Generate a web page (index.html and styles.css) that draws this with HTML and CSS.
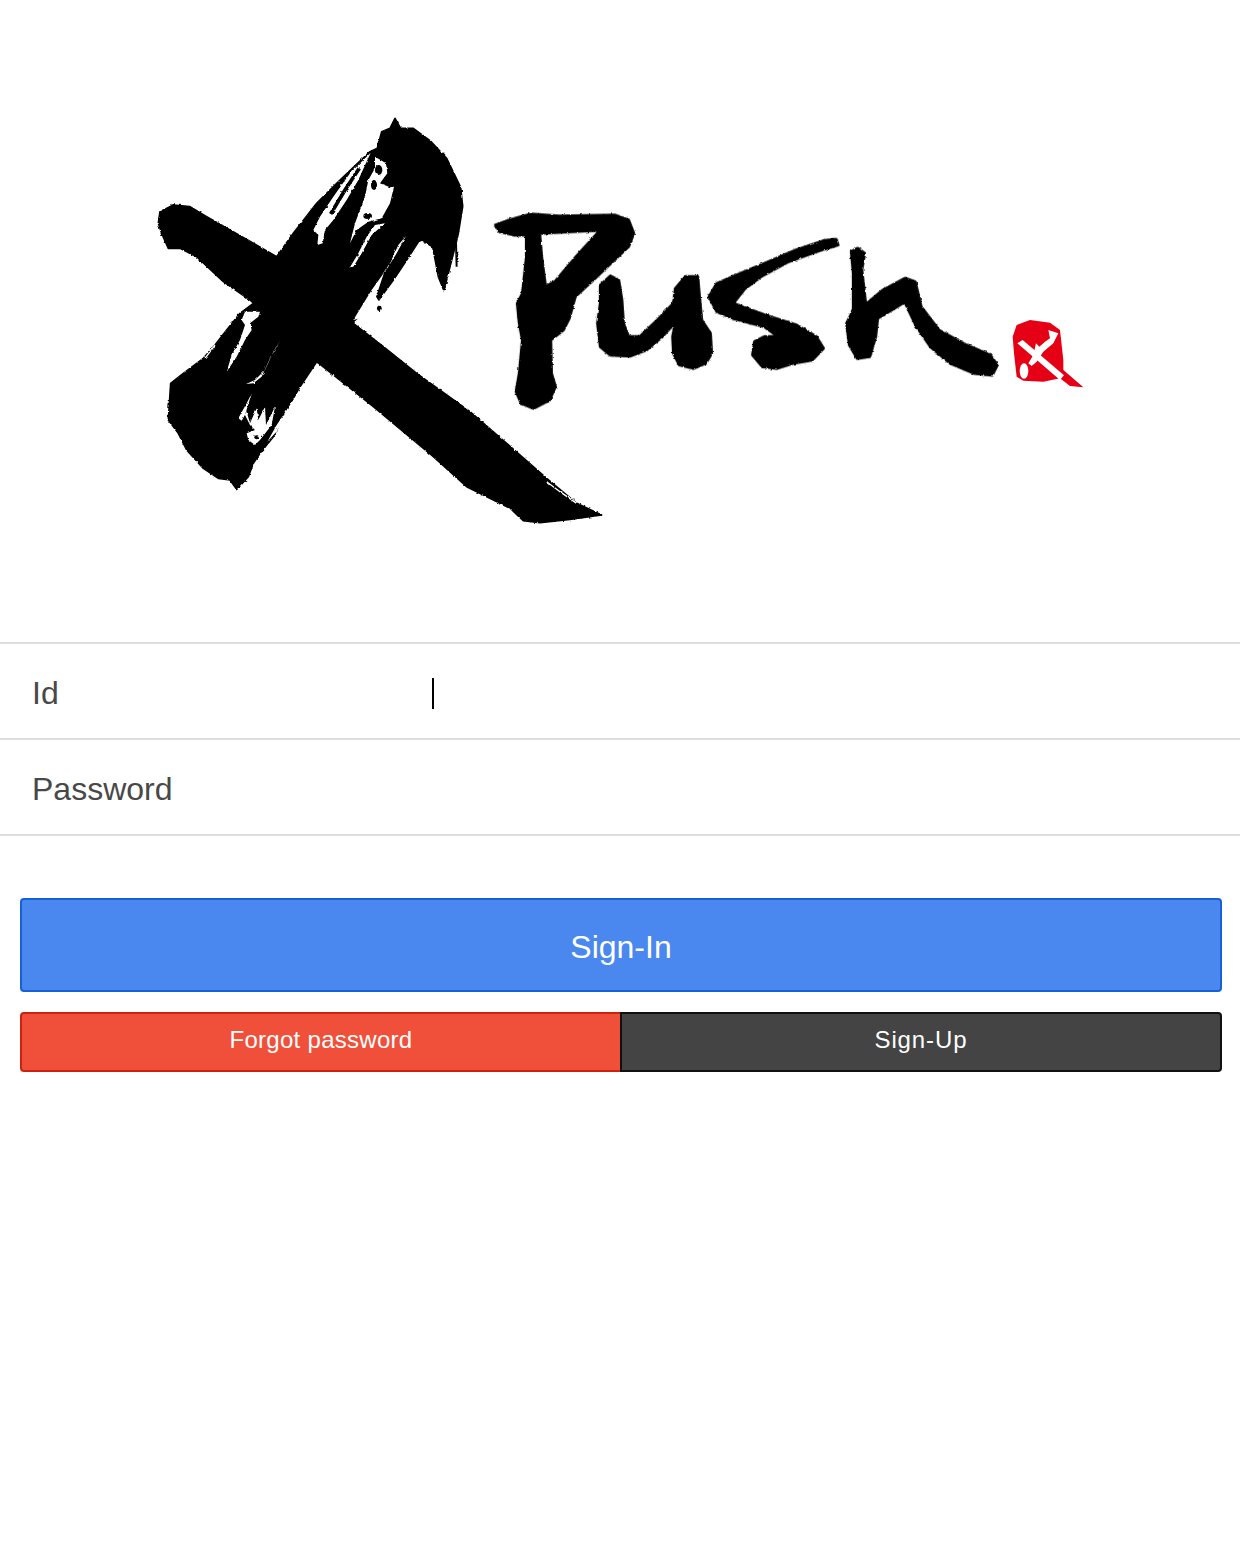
FILE: index.html
```html
<!DOCTYPE html>
<html lang="en">
<head>
<meta charset="utf-8">
<title>XPush</title>
<link rel="stylesheet" href="styles.css">
</head>
<body>
<header class="logo-area">
<svg class="logo" viewBox="0 0 1240 642" role="img" aria-label="XPush logo">
<defs>
<filter id="brush" x="-5%" y="-5%" width="110%" height="110%">
<feTurbulence type="fractalNoise" baseFrequency="0.3" numOctaves="2" seed="4" result="noise"/>
<feDisplacementMap in="SourceGraphic" in2="noise" scale="2.6" xChannelSelector="R" yChannelSelector="G"/>
<feGaussianBlur stdDeviation="0.45"/>
</filter>
<filter id="soft" x="-5%" y="-5%" width="110%" height="110%">
<feGaussianBlur stdDeviation="0.6"/>
</filter>
</defs>
<g filter="url(#brush)">
<g transform="translate(140 100) scale(.33333)">
<path class="ink ink-round" d="M765,55 L782,85 820,85 870,122 920,175 962,262 968,320 955,400 948,430 925,520 912,572 895,530 878,440 840,418 800,480 760,540 720,595 640,665 530,785 480,860 440,930 400,1010 360,1060 340,1090 325,1130 290,1168 270,1140 235,1135 190,1105 140,1050 115,1000 85,960 92,850 130,820 190,775 225,735 260,690 300,640 340,610 410,470 460,400 530,310 600,240 690,155 712,145 725,95 750,85 Z"/>
<path class="ink ink-round" d="M60,335 L100,315 150,320 200,350 270,390 340,430 410,470 640,670 730,740 830,820 990,935 1100,1030 1220,1135 1310,1210 1385,1245 1290,1258 1200,1268 1150,1262 1110,1225 980,1160 880,1070 700,920 530,785 330,600 250,545 170,470 120,445 85,445 65,400 55,370 Z"/>
<path class="ink-fine" d="M948,430 L950,500"/>
<path class="fray-thin" d="M1220,1145 L1260,1175 L1310,1210 M1105,1225 L1140,1262"/>
</g>
<g transform="translate(300 140) scale(.33333)">
<path class="paper" d="M212,38 L150,100 L100,170 L60,230 L40,270 L55,285 L52,315 L68,310 L75,270 L100,240 L140,180 L175,120 Z"/>
<path class="ink-line" d="M178,85 L135,150 L92,222"/>
<path class="paper" d="M225,50 L258,70 L262,100 L240,130 L270,142 L282,140 L270,190 L245,235 L205,245 L170,270 L150,310 L165,250 L180,210 L195,170 L205,120 L225,85 Z"/>
<ellipse class="ink" cx="236" cy="90" rx="11" ry="15"/>
<ellipse class="ink" cx="203" cy="228" rx="13" ry="9"/>
<ellipse class="ink" cx="222" cy="135" rx="9" ry="15"/>
<path class="paper" d="M255,250 L225,255 L200,290 L175,340 L150,382 L160,380 L185,340 L215,285 Z"/>
<path class="paper" d="M318,288 L295,315 L270,370 L245,405 L262,385 L290,340 Z"/>
<path class="paper" d="M252,398 L215,450 L160,540 L200,530 L240,490 L228,470 Z"/>
<ellipse class="ink" cx="238" cy="505" rx="7" ry="8"/>
</g>
<g transform="translate(190 300) scale(.33333)">
<path class="fray-thin" d="M75,135 L45,175"/>
<path class="paper" d="M165,35 L210,35 L205,50 L180,70 L185,90 L165,120 L140,170 L110,215 L125,165 L150,120 L165,75 L155,60 Z"/>
<path class="paper" d="M272,120 L250,155 L225,210 L195,240 L168,252 L190,250 L215,230 L240,175 Z"/>
<path class="paper" d="M185,280 L170,310 L145,355 L155,362 L170,335 L180,370 L200,325 L205,360 L225,320 L228,375 L255,320 L245,375 L210,420 L195,435 L175,420 L170,400 L195,390 L180,375 L165,345 Z"/>
<ellipse class="ink" cx="200" cy="412" rx="7" ry="6"/>
<path class="paper" d="M335,268 L300,315 L260,375 L232,425 L255,400 L290,350 L328,290 Z"/>
</g>
<g class="ink-push" transform="translate(480 190) scale(.3953 .33333)">
<path class="ink" fill-rule="evenodd" d="M40,105 L80,88 130,72 200,78 340,75 375,90 388,130 375,170 330,220 290,265 240,320 225,385 210,420 178,450 180,550 190,590 175,630 135,655 105,640 92,605 100,550 108,450 100,400 95,340 108,310 118,200 118,135 85,135 50,125 Z M150,130 L305,120 L240,205 L190,275 L165,290 L155,200 Z"/>
<path class="ink" d="M305,285 L330,258 350,270 358,330 362,400 375,440 405,440 445,395 490,340 495,295 520,260 550,260 555,330 560,390 582,430 585,490 570,520 540,535 505,525 490,490 488,440 495,395 460,440 420,480 380,498 330,495 305,470 298,400 305,340 Z"/>
<path class="ink" d="M900,148 L905,165 850,185 780,215 710,260 670,295 640,340 720,375 800,405 850,440 868,475 840,510 790,520 750,535 715,530 690,495 695,455 720,440 755,440 720,410 640,385 600,365 580,320 600,280 650,255 720,220 800,180 870,152 Z"/>
<path class="ink" d="M940,185 L955,175 972,190 965,240 975,345 1020,300 1075,265 1100,275 1115,350 1160,420 1230,465 1290,495 1308,525 1295,555 1250,550 1190,520 1140,470 1105,410 1075,335 1040,360 1005,385 1000,440 985,500 955,505 935,465 928,400 945,360 945,250 Z"/>
</g>
</g>
<g transform="translate(1000 310) scale(.33333)" filter="url(#soft)">
<path class="seal" d="M50,45 L90,30 150,38 180,60 190,150 190,180 250,232 210,228 180,205 130,215 70,212 50,200 42,130 38,80 Z"/>
<path class="paper" d="M52,100 L68,90 192,196 L180,210 Z"/>
<path class="paper" d="M145,60 L175,70 L160,100 L130,125 L110,155 L95,168 L85,160 L100,135 L108,100 L118,110 L135,95 L150,85 Z"/>
<ellipse class="paper" cx="72" cy="183" rx="13" ry="23"/>
</g>
</svg>
</header>

<main>
<section class="fields">
<div class="field"><span class="field-label">Id</span><span class="caret"></span></div>
<div class="field"><span class="field-label">Password</span></div>
</section>
<section class="actions">
<button class="btn btn-primary" type="button">Sign-In</button>
<div class="btn-group">
<button class="btn btn-small btn-danger" type="button">Forgot password</button>
<button class="btn btn-small btn-dark" type="button">Sign-Up</button>
</div>
</section>
</main>
</body>
</html>
```

FILE: styles.css
```css
* { box-sizing: border-box; }

html, body {
  margin: 0;
  background: #fff;
}

body {
  font-family: "Liberation Sans", Arial, sans-serif;
  color: #484848;
  min-height: 1542px;
}

.logo-area { height: 642px; }

.logo {
  display: block;
  width: 1240px;
  height: 642px;
}

.ink { fill: #000; }
.ink-round { stroke: #000; stroke-width: 5; stroke-linejoin: round; }
.ink-push .ink { stroke: #000; stroke-width: 9; stroke-linejoin: round; }
.paper { fill: #fff; }
.ink-fine { fill: none; stroke: #000; stroke-width: 6; }
.ink-line { fill: none; stroke: #000; stroke-width: 11; }
.fray-thin { fill: none; stroke: #fff; stroke-width: 4; }
.seal { fill: #e60012; }

.fields { border-top: 2px solid #ddd; }

.field {
  display: flex;
  align-items: center;
  height: 96px;
  padding: 4px 0 0 32px;
  border-bottom: 2px solid #ddd;
}

.field-label {
  flex: 0 0 400px;
  font-size: 32px;
  line-height: 36px;
}

.caret {
  width: 2px;
  height: 31px;
  background: #000;
}

.actions {
  display: flex;
  flex-direction: column;
  gap: 20px;
  padding: 62px 18px 0 20px;
}

.btn {
  display: block;
  margin: 0;
  padding: 0;
  border: 2px solid;
  border-radius: 4px;
  color: #fff;
  font-family: inherit;
}

.btn-primary {
  width: 100%;
  height: 94px;
  padding-top: 4px;
  font-size: 32px;
  background: #4a87ee;
  border-color: #1661d8;
}

.btn-group { display: flex; }

.btn-small {
  flex: 0 0 602px;
  height: 60px;
  padding-bottom: 4px;
  font-size: 24px;
}

.btn-danger {
  background: #f0503a;
  border-color: #cc2311;
  border-radius: 4px 0 0 4px;
  letter-spacing: 0.28px;
}

.btn-dark {
  margin-left: -2px;
  background: #444;
  border-color: #111;
  border-radius: 0 4px 4px 0;
  letter-spacing: 0.9px;
}
```
